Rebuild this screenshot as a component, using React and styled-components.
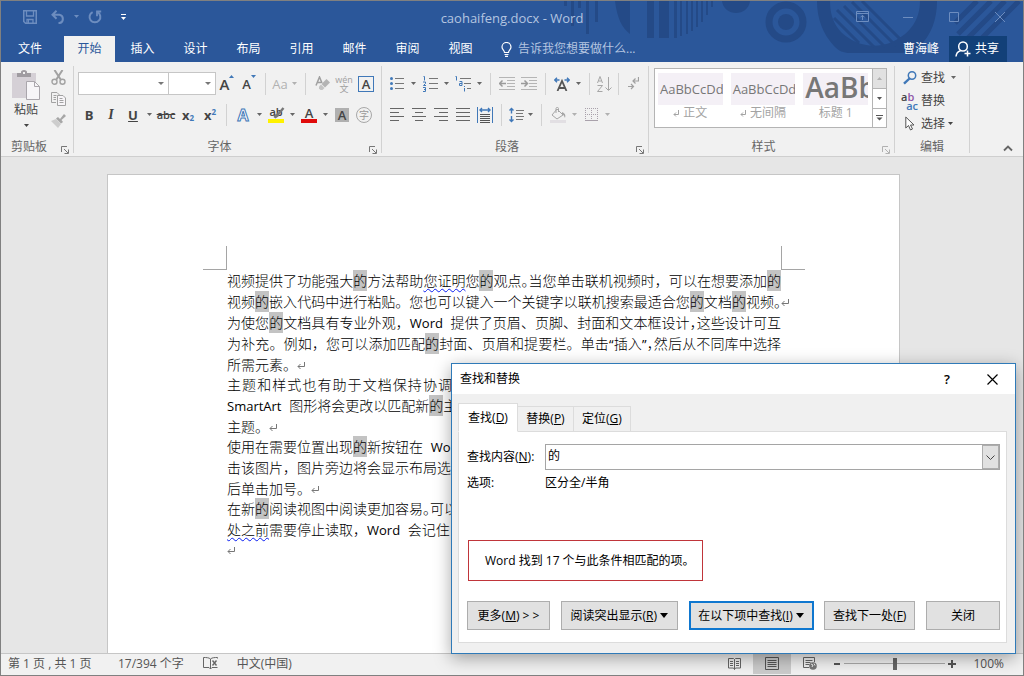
import React, { useState } from 'react';
import styled, { createGlobalStyle, css } from 'styled-components';

const color = {
    brand: '#2b579a',
    brandDark: '#124078',
    pattern: '#244a87',
    faded: '#6d8dbf',
    ribbon: '#f1f1f1',
    line: '#d2d2d2',
    text: '#444444',
    label: '#666666',
    accent: '#4078b8',
    disabled: '#b1b1b1',
};

const GlobalStyle = createGlobalStyle`
    * {
        box-sizing: border-box;
    }
    body {
        margin: 0;
        font-family: 'Open Sans', 'Noto Sans CJK SC', sans-serif;
        font-size: 12px;
        line-height: 16px;
        color: ${color.text};
    }
    button, input, select {
        font: inherit;
        color: inherit;
    }
    button {
        padding: 0;
        border: 0;
        background: none;
    }
    svg {
        display: block;
        flex: none;
    }
`;

/* ---------- icons ---------- */

const Icon = ({ w = 16, h = 16, children, ...rest }) => (
    <svg
        width={w}
        height={h}
        viewBox={`0 0 ${w} ${h}`}
        fill="none"
        stroke="currentColor"
        aria-hidden="true"
        {...rest}
    >
        {children}
    </svg>
);

const SaveIcon = () => (
    <Icon w={14} h={14}>
        <path d="M.75 .75h12.5v12.5H2.5L.75 11.5z" strokeWidth="1.5" />
        <path d="M3.5 1v5h7V1M4 13V9.5h6V13" strokeWidth="1.3" />
        <path d="M5.5 10v3" />
    </Icon>
);

const UndoIcon = () => (
    <Icon w={15} h={14}>
        <path d="M5.5 .8L1.5 4.7l4 4M2 4.7h6.5a4.3 4.3 0 0 1 0 8.4H7.5" strokeWidth="2" />
    </Icon>
);

const RedoIcon = () => (
    <Icon w={14} h={14}>
        <path d="M9.5 2.2A5.4 5.4 0 1 1 4.6 2.1" strokeWidth="2" />
        <path d="M9 6.2V1.5h4.2" strokeWidth="1.8" />
    </Icon>
);

const RibbonOptionsIcon = () => (
    <Icon w={13} h={11}>
        <path d="M.5 .5h12v10H.5zM.5 2.5h12M6.5 9V4.5M4.5 6.3l2-2 2 2" />
    </Icon>
);

const BulbIcon = () => (
    <Icon w={11} h={15}>
        <path
            d="M3.5 10.5C3.5 8.5 1 7.8 1 5a4.4 4.4 0 0 1 9 0c0 2.8-2.5 3.5-2.5 5.5zM3.5 12.5h4M4 14.3h3"
            strokeWidth="1.2"
        />
    </Icon>
);

const ShareIcon = () => (
    <Icon>
        <path
            d="M1 15.500c.3-3.200 1.800-5 4.300-5.800M8 1a4.300 4.300 0 0 1 4.300 4.500C12.300 8 10.500 10 8 10S3.700 8 3.700 5.500 5.500 1 8 1zM12.500 9.500v6M9.500 12.500h6"
            strokeWidth="1.500"
        />
    </Icon>
);

const PasteIcon = () => (
    <Icon w={28} h={30} stroke="none">
        <path d="M0 3h24v25H0z" fill="#d5d0d6" />
        <path d="M5 3h4V2c0-1 1-2 3-2s3 1 3 2v1h4v4H5z" fill="#a09ca1" />
        <path d="M11 2h2v2h-2z" fill="#f1f1f1" />
        <path d="M14.500 11.500h8l5 5v13h-13z" fill="#f7f5f8" stroke="#aaa6ac" />
        <path d="M22.500 11.500v5h5" stroke="#aaa6ac" />
    </Icon>
);

const CutIcon = () => (
    <Icon w={15} h={15} stroke="#a2a2a2" strokeWidth="1.4">
        <path d="M3.500 0l6.500 10M11.500 0L5 10" strokeWidth="2" />
        <circle cx="3.500" cy="11.700" r="2.500" />
        <circle cx="11.500" cy="11.700" r="2.500" />
    </Icon>
);

const CopyIcon = () => (
    <Icon w={15} h={14} stroke="#a2a2a2">
        <path d="M5 10.500H.5V.5H6l2.500 2.500M2.500 3.500h3M2.500 5.500h2.500M2.500 7.500h2.500" />
        <path d="M6.500 3.500H12l2.500 2.500v7.500h-8z" fill="#f7f5f8" />
        <path d="M8.500 6.500h3M8.500 8.500h4M8.500 10.500h4" />
    </Icon>
);

const BrushIcon = () => (
    <Icon w={15} h={14} stroke="none">
        <path d="M0 7l5-2 5 5-3 4z" fill="#cdcdcd" />
        <path d="M5 4.500l2-1.500 2 2 4-5 2 2-4.500 4 1.500 2-2 1.500z" fill="#a6a6a6" />
    </Icon>
);

const EraserIcon = () => (
    <Icon w={15} h={15} stroke="none">
        <path d="M1 9.500L4.500 1 7 7M2.300 6.500h4" stroke="#a0a0a0" strokeWidth="1.500" />
        <path d="M11.500 3l3.500 3.500-5 5-3.500-3.500z" fill="#b4b4b4" />
        <path d="M6 8.500l3.500 3.500-2 2H5.500L4 12.500V10.500z" fill="#c4c4c4" />
    </Icon>
);

const HighlighterIcon = () => (
    <Icon w={17} h={12}>
        <path d="M15.500 1L9.500 8" stroke="#777" strokeWidth="2.400" />
        <path d="M8 6.500L11 9l-3.500 2.500L5.500 10z" fill="#777" stroke="none" />
    </Icon>
);

const BulletsIcon = () => (
    <Icon w={14} h={15}>
        <path d="M5 2.500h9M5 7.500h9M5 12.500h9" stroke="#777" />
        <g fill={color.accent} stroke="none">
            <circle cx="1.500" cy="2.500" r="1.500" />
            <circle cx="1.500" cy="7.500" r="1.500" />
            <circle cx="1.500" cy="12.500" r="1.500" />
        </g>
    </Icon>
);

const NumberingIcon = () => (
    <Icon w={15} h={16}>
        <path d="M6 2.500h9M6 7.500h9M6 12.500h9" stroke="#777" />
        <path
            d="M.5 .5h1v4M0 6h2.500v1.500L.5 9.500H3M0 11.500h2.500v4H0M1 13.500h1.500"
            stroke={color.accent}
        />
    </Icon>
);

const MultilevelIcon = () => (
    <Icon w={16} h={16}>
        <path d="M5 2.500h11M9 7.500h7M12 12.500h4" stroke="#777" />
        <path
            d="M.5 .5h1v4M4.500 5.500H7v4H4.500v-2H7M9.500 12v3.500M9.500 10v1"
            stroke={color.accent}
        />
    </Icon>
);

const IndentIcon = ({ out }) => (
    <Icon w={16} h={13} stroke="#b5b5b5">
        <path d="M0 .5h16M8 3.500h8M8 6.500h8M8 9.500h8M0 12.500h16" />
        <path
            d={out ? 'M7 6.500H1M3.500 3.500l-3 3 3 3' : 'M0 6.500h6M3.500 3.500l3 3-3 3'}
            stroke="#9a9a9a"
            strokeWidth="1.500"
        />
    </Icon>
);

const TextScaleIcon = () => (
    <Icon w={16} h={14}>
        <path d="M3.500 14L8 4l4.500 10M5 11h6" stroke="#555" strokeWidth="1.800" />
        <path
            d="M5.500 3H1M3 .8L.8 3 3 5.200M10.500 3H15M13 .8L15.200 3 13 5.200"
            stroke={color.accent}
            strokeWidth="1.400"
        />
    </Icon>
);

const SortIcon = () => (
    <Icon w={15} h={16} stroke="#a6a6a6">
        <path d="M.5 7L3 .5 5.500 7M1.500 5h3M.5 9.500h5l-5 6h5M11.500 1v13M8.500 11.500l3 3 3-3" />
    </Icon>
);

const MarksIcon = () => (
    <Icon w={11} h={13} stroke="#a0a0a0" strokeWidth="1.200">
        <path d="M10.500 0v4H5M7.500 1.500L5 4l2.500 2.500M0 9.500h5M3 7l2.500 2.500L3 12" />
    </Icon>
);

const alignPaths = {
    left: 'M0 .5h14M0 4.500h9M0 8.500h14M0 12.500h9',
    center: 'M0 .5h14M3 4.500h8M0 8.500h14M3 12.500h8',
    right: 'M0 .5h14M5 4.500h9M0 8.500h14M5 12.500h9',
    justify: 'M0 .5h14M0 4.500h14M0 8.500h14M0 12.500h14',
};

const AlignIcon = ({ kind }) => (
    <Icon w={14} h={13} stroke="#666">
        <path d={alignPaths[kind]} />
    </Icon>
);

const DistributeIcon = () => (
    <Icon w={16} h={16}>
        <path d="M3 7.500h10M3 9.500h10M3 11.500h10M3 13.500h10M3 15.500h10" stroke="#555" />
        <path d="M.5 0v16M15.500 0v16" stroke={color.accent} />
        <path
            d="M3 3h10M5 1L3 3l2 2M11 1l2 2-2 2"
            stroke={color.accent}
            strokeWidth="1.400"
        />
    </Icon>
);

const SpacingIcon = () => (
    <Icon w={15} h={16}>
        <path d="M7 3.500h8M7 6.500h7M7 9.500h8M7 12.500h7" stroke="#777" />
        <path
            d="M2.500 1v5.500M.5 3.500l2-2 2 2M2.500 9v5.500M.5 12.500l2 2 2-2"
            stroke={color.accent}
            strokeWidth="1.400"
        />
    </Icon>
);

const BucketIcon = () => (
    <Icon w={17} h={16} stroke="#a6a6a6">
        <path d="M7 2l6 6-6 4-5-4zM6 6V1.500c0-1.500 2.500-1.500 2.500 0V5" />
        <path d="M12 5c3 1 4 3 3 6-1-2-1-3-3-4z" fill="#a6a6a6" stroke="none" />
        <path d="M0 13h16v3H0z" fill="#e2dfe3" stroke="none" />
    </Icon>
);

const BordersIcon = () => (
    <Icon w={13} h={13} stroke="#a9a1ab">
        <path d="M.5 0v12M6.500 0v12M12.500 0v12M0 .5h13M0 6.500h13" strokeDasharray="1 1" />
        <path d="M0 12.500h13" />
    </Icon>
);

const LauncherIcon = () => (
    <Icon w={8} h={8}>
        <path d="M.5 6V.5H6M3 3l4 4M7.500 3.500v4h-4" />
    </Icon>
);

const SearchIcon = () => (
    <Icon w={14} h={14} stroke={color.accent}>
        <circle cx="9" cy="4.500" r="3.700" strokeWidth="1.500" />
        <path d="M6.500 7.500L1 12.700" strokeWidth="2.400" />
    </Icon>
);

const PointerIcon = () => (
    <Icon w={10} h={15} stroke="#555">
        <path d="M.8 1v11l2.700-2.500L5.500 14l2-1-2-4h3.500z" fill="#fff" />
    </Icon>
);

const ReturnMark = () => (
    <MarkSvg width="8" height="8" viewBox="0 0 8 8" fill="none" stroke="#777">
        <path d="M7.500 0v4.500H1M3.500 2L1 4.500 3.500 7" />
    </MarkSvg>
);

const ProofIcon = () => (
    <Icon w={15} h={13} stroke="#666">
        <path d="M7.500 2v10M7.500 2C6 .5 3 .5 .5 .5v10H6l1.500 1.500L9 10.500h5.500M7.500 2C9 .5 12 .5 14.500 .5v1" />
        <path d="M9.500 3.500l4 5M13.500 3.500l-4 5" strokeWidth="1.400" />
    </Icon>
);

const ReadIcon = () => (
    <Icon w={13} h={12} stroke="#666">
        <path d="M6.500 1.500v10M6.500 1.500L5.500 .5H.5v9.500h5l1 1.500 1-1.500h5V.5h-5z" />
        <path d="M2 3.500h3M2 5.500h3M2 7.500h3M8 3.500h3M8 5.500h3M8 7.500h3" />
    </Icon>
);

const PrintIcon = () => (
    <Icon w={14} h={13} stroke="#555">
        <path d="M.5 .5h13v12H.5zM2.500 3.500h9M2.500 5.500h9M2.500 7.500h9M2.500 9.500h9" />
    </Icon>
);

const WebIcon = () => (
    <Icon w={14} h={13} stroke="#666">
        <path d="M6 10.500H.5V.5h11V5M2.500 3.500h7M2.500 5.500h5M2.500 7.500h4" />
        <circle cx="10" cy="9" r="3.800" fill="#777" stroke="none" />
        <path d="M8 7l2 1-1 2M11 6.500l1 2" stroke="#f1f1f1" />
    </Icon>
);

const TitlePattern = () => (
    <PatternSvg width="473" height="61" viewBox="0 0 473 61" aria-hidden="true">
        <g fill={color.pattern}>
            <path d="M14 0h3v5h-3zM21 0h3v25h-3zM28 0h3v7h-3zM36 0h3v33h-3zM45 0h3v21h-3z" />
            <path d="M65 0h15v33c-8-6-13-16-15-33zM97 0h7v37h-7zM109 0h10v37h-10z" />
            <path d="M124 0h3v37h-3zM130 0h2v35h-2zM136 0h2v33h-2zM141 0h2v30h-2zM146 0h2v26h-2zM151 0h2v21h-2zM156 0h2v14h-2zM161 0h2v6h-2z" />
            <path d="M172 0h28c-2 16-26 16-28 0z" />
            <circle cx="236" cy="21" r="8" />
            <path d="M267 0h13c0 17 6 32 26 41 12 5 24 5 36 0 20-9 28-24 28-41h17c0 19-6 34-18 46-5 4-8 6-13 6h-56c-7 0-11-2-16-7-11-12-17-27-17-45z" />
        </g>
        <g fill="none" stroke={color.pattern}>
            <circle cx="236" cy="21" r="17" strokeWidth="7" />
            <path d="M284 17l25 25M287 9l37 37M294 5l41 41M302 1l44 44M312 0l42 42" strokeWidth="3" />
            <path
                d="M405 22L427 0M408 33L441 0M418 37L455 0M429 40L469 0"
                strokeWidth="5"
            />
        </g>
    </PatternSvg>
);

/* ---------- window ---------- */

const Window = styled.div`
    position: relative;
    display: flex;
    flex-direction: column;
    min-height: 100vh;
    border: 1px solid #808080;
    background: #e6e6e6;
    overflow: hidden;
`;

const Header = styled.header`
    position: relative;
    background: ${color.brand};
    color: #fff;
`;

const PatternSvg = styled.svg`
    position: absolute;
    right: 0;
    top: 0;
`;

const TitleBar = styled.div`
    position: relative;
    display: grid;
    grid-template-columns: 1fr auto 1fr;
    align-items: center;
    height: 35px;
    color: ${color.faded};
`;

const QuickAccess = styled.div`
    display: flex;
    align-items: center;
    gap: 4px;
    padding: 0 0 4px 17px;
`;

const Title = styled.span`
    padding-bottom: 2px;
    font-size: 13px;
    color: #b4c5e0;
`;

const WindowButtons = styled.div`
    display: flex;
    justify-content: flex-end;
    padding-bottom: 4px;
`;

const BarButton = styled.button`
    display: flex;
    align-items: center;
    justify-content: center;
    width: ${({ $w }) => $w || 24}px;
    height: 24px;
    color: ${({ $bright }) => ($bright ? '#fff' : 'inherit')};
`;

const TabBar = styled.nav`
    position: relative;
    display: flex;
    height: 26px;
`;

const Tab = styled.button`
    width: 53px;
    color: ${({ $active }) => ($active ? color.brand : '#fff')};
    ${({ $active }) =>
        $active &&
        css`
            width: 51px;
            margin-right: 1px;
            background: ${color.ribbon};
        `}
    ${({ $file }) =>
        $file &&
        css`
            width: 58px;
            margin-right: 5px;
        `}
`;

const TellMe = styled.button`
    display: flex;
    align-items: center;
    gap: 6px;
    margin-left: 14px;
    color: #b4c5e0;
    svg {
        color: #fff;
    }
`;

const Account = styled.div`
    display: flex;
    align-items: center;
    gap: 10px;
    margin-left: auto;
    padding-right: 16px;
`;

const ShareButton = styled.button`
    display: flex;
    align-items: center;
    gap: 4px;
    height: 26px;
    padding: 0 8px 0 6px;
    background: ${color.brandDark};
`;

/* ---------- ribbon ---------- */

const Ribbon = styled.div`
    position: relative;
    display: flex;
    height: 95px;
    padding: 4px 0 3px;
    background: ${color.ribbon};
    border-bottom: 1px solid #cfcfcf;
`;

const Group = styled.section`
    display: flex;
    flex-direction: column;
    justify-content: space-between;
    width: ${({ $w }) => $w}px;
    padding: 0 4px;
    border-right: 1px solid ${color.line};
`;

const GroupBody = styled.div`
    display: flex;
    flex-direction: ${({ $row }) => ($row ? 'row' : 'column')};
    gap: ${({ $row }) => ($row ? 2 : 4)}px;
`;

const GroupFooter = styled.div`
    display: flex;
    align-items: center;
    height: 12px;
    color: ${color.label};
`;

const GroupName = styled.span`
    flex: 1;
    padding-right: 8px;
    text-align: center;
    &:only-child {
        padding-right: 0;
    }
`;

const Launcher = styled.button`
    padding-top: 5px;
    color: ${({ $disabled }) => ($disabled ? color.disabled : '#777')};
`;

const CollapseButton = styled.button`
    margin: auto 10px 1px auto;
`;

const ToolRow = styled.div`
    display: flex;
    align-items: center;
    height: 27px;
    &:first-child {
        margin-top: 4px;
    }
`;

const Tool = styled.button`
    display: flex;
    align-items: center;
    justify-content: center;
    width: ${({ $narrow }) => ($narrow ? 18 : 22)}px;
    height: 22px;
    flex: none;
    color: ${({ $disabled }) => ($disabled ? color.disabled : color.text)};
`;

const Letter = styled.span`
    font-size: 13px;
    font-weight: ${({ $bold }) => ($bold ? 700 : 400)};
    line-height: 16px;
`;

const Italic = styled.i`
    font-family: 'Liberation Serif', serif;
    font-size: 14px;
    font-weight: 700;
`;

const Strike = styled.s`
    font-size: 11px;
    font-weight: 600;
`;

const Script = styled.span`
    display: flex;
    align-items: ${({ $up }) => ($up ? 'flex-start' : 'flex-end')};
    font-size: 13px;
    font-weight: 700;
    line-height: 14px;
    small {
        font-size: 8px;
        line-height: 8px;
        color: ${color.accent};
    }
`;

const BoxedLetter = styled.span`
    width: 16px;
    height: 16px;
    border: 1px solid ${color.accent};
    font-weight: 600;
    font-size: 13px;
    line-height: 14px;
    text-align: center;
`;

const ShadedLetter = styled.span`
    width: 14px;
    height: 14px;
    background: #b0b0b0;
    font-weight: 600;
    font-size: 13px;
    line-height: 14px;
`;

const CircledLetter = styled.span`
    width: 16px;
    height: 16px;
    border: 1px solid #a8a8a8;
    border-radius: 50%;
    font-size: 10px;
    line-height: 14px;
    color: #999;
`;

const Phonetic = styled.span`
    display: flex;
    flex-direction: column;
    align-items: center;
    font-size: 9px;
    line-height: 9px;
    color: #a0a0a0;
`;

const EffectLetter = styled.span`
    font-size: 16px;
    font-weight: 700;
    color: #fff;
    -webkit-text-stroke: 1px ${color.accent};
`;

const Swatch = styled.span`
    display: flex;
    flex-direction: column;
    align-items: center;
    width: 16px;
    border-bottom: 4px solid ${({ $color }) => $color};
    font-size: 13px;
    font-weight: 600;
    line-height: 12px;
`;

const HighlightGlyph = styled.span`
    display: grid;
    font-size: 11px;
    line-height: 10px;
    > * {
        grid-area: 1 / 1;
    }
`;

const SizeLetter = styled.span`
    display: flex;
    align-items: flex-start;
    font-size: ${({ $size }) => $size}px;
    font-weight: 600;
    line-height: 18px;
    svg {
        color: ${color.accent};
    }
`;

const CaretButton = styled.button`
    display: flex;
    align-items: center;
    justify-content: center;
    width: 11px;
    height: 22px;
    flex: none;
    color: ${({ $disabled }) => ($disabled ? color.disabled : '#666')};
`;

const Separator = styled.span`
    width: 1px;
    height: 22px;
    margin: 0 5px;
    background: ${color.line};
`;

const SelectBox = styled.label`
    display: flex;
    align-items: center;
    width: ${({ $w }) => $w}px;
    height: 23px;
    padding-right: 4px;
    border: 1px solid #c6c6c6;
    background: #fff;
    & + & {
        border-left: 0;
    }
    svg {
        color: #777;
    }
`;

const NativeSelect = styled.select`
    flex: 1;
    min-width: 0;
    height: 100%;
    border: 0;
    background: none;
    appearance: none;
`;

const PasteButton = styled.button`
    display: flex;
    flex-direction: column;
    align-items: center;
    gap: 2px;
    width: 42px;
    padding-top: 4px;
    svg:last-child {
        margin-top: 4px;
    }
`;

const IconColumn = styled.div`
    display: flex;
    flex-direction: column;
`;

const Gallery = styled.div`
    display: flex;
    height: 60px;
    margin: 2px 3px 0 1px;
    border: 1px solid #b4b4b4;
    background: #fff;
`;

const StyleList = styled.div`
    display: flex;
    flex: 1;
    gap: 8px;
    min-width: 0;
    padding: 4px 4px 0 3px;
`;

const StyleButton = styled.button`
    display: flex;
    flex: 1;
    flex-direction: column;
    align-items: center;
    min-width: 0;
    color: #a3a3a3;
`;

const Sample = styled.span`
    width: 100%;
    height: 32px;
    padding: 0 2px;
    overflow: hidden;
    background: #f4f0f6;
    color: #777;
    font-size: ${({ $large }) => ($large ? 28 : 13)}px;
    font-weight: ${({ $large }) => ($large ? 600 : 400)};
    line-height: ${({ $large }) => ($large ? 28 : 32)}px;
    text-align: left;
    white-space: nowrap;
`;

const StyleName = styled.span`
    display: flex;
    align-items: center;
    gap: 4px;
`;

const GalleryScroll = styled.div`
    display: grid;
    grid-template-rows: repeat(3, 1fr);
    flex: none;
    width: 14px;
    border-left: 1px solid #b4b4b4;
`;

const ScrollButton = styled.button`
    display: flex;
    align-items: center;
    justify-content: center;
    background: ${({ $disabled }) => ($disabled ? '#e1e1e1' : '#fff')};
    color: ${({ $disabled }) => ($disabled ? '#b1b1b1' : '#555')};
    & + & {
        border-top: 1px solid #b4b4b4;
    }
`;

const EditButton = styled.button`
    display: flex;
    align-items: center;
    gap: 3px;
    height: 23px;
    padding-left: 2px;
`;

const EditIcon = styled.span`
    display: flex;
    justify-content: center;
    width: 17px;
`;

const ReplaceGlyph = styled.span`
    width: 17px;
    font-size: 11px;
    font-weight: 600;
    line-height: 9px;
    text-align: left;
    b {
        display: block;
        font-weight: 600;
        text-align: right;
        color: ${color.accent};
    }
    em {
        font-style: normal;
        color: #8e57a8;
    }
`;

/* ---------- document ---------- */

const Workspace = styled.main`
    display: flex;
    flex: 1;
    justify-content: center;
    padding: 17px 17px 0 0;
`;

const Page = styled.article`
    width: 793px;
    padding: 71px 118px 0 119px;
    border: 1px solid #c6c6c6;
    border-bottom: 0;
    background: #fff;
`;

const CropRow = styled.div`
    display: flex;
    justify-content: space-between;
    margin: 0 -24px;
`;

const CropMark = styled.span`
    width: 24px;
    height: 24px;
    border-bottom: 1px solid #a5a5a5;
    ${({ $side }) =>
        css`
            border-${$side}: 1px solid #a5a5a5;
        `}
`;

const Paragraph = styled.p`
    margin: 0;
    font-size: 14px;
    font-weight: 300;
    line-height: 21px;
    color: #000;
    & + & + & {
        margin-top: -1px;
    }
`;

const Line = styled.span`
    display: block;
    width: ${({ $half }) => ($half ? '225px' : 'auto')};
    height: 21px;
    white-space: nowrap;
    text-align-last: ${({ $last }) => ($last ? 'left' : 'justify')};
`;

const Found = styled.mark`
    display: inline-block;
    height: 21px;
    background: #c3c3c3;
    color: inherit;
    vertical-align: top;
`;

const Latin = styled.span`
    font-size: 13px;
    font-weight: 400;
`;

const Gap = styled.span`
    padding-left: 4px;
`;

const HalfWidth = styled.span`
    font-feature-settings: 'halt';
`;

const Squiggle = styled.span`
    text-decoration: underline wavy #0a1ef0 1px;
    text-underline-offset: 2px;
`;

const MarkSvg = styled.svg`
    display: inline-block;
    margin-right: -8px;
`;

/* ---------- dialog ---------- */

const Dialog = styled.section`
    position: absolute;
    right: 7px;
    bottom: 21px;
    width: 565px;
    border: 1px solid #2f7ab8;
    background: #f0f0f0;
    color: #000;
    box-shadow: 0 4px 16px rgba(0, 0, 0, 0.35);
`;

const DialogTitle = styled.div`
    display: flex;
    align-items: center;
    height: 30px;
    padding: 0 16px 0 8px;
    background: #fff;
`;

const DialogName = styled.h2`
    flex: 1;
    margin: 0;
    font-size: 12px;
    font-weight: 400;
`;

const TitleButton = styled.button`
    display: flex;
    justify-content: center;
    width: 14px;
    font-weight: 600;
    font-size: 13px;
    & + & {
        margin-left: 31px;
    }
`;

const DialogTabs = styled.div`
    display: flex;
    align-items: flex-end;
    margin: 9px 8px -1px 6px;
`;

const DialogTab = styled.button`
    min-width: ${({ $active }) => ($active ? 60 : 56)}px;
    height: ${({ $active }) => ($active ? 29 : 26)}px;
    padding: 0 8px;
    border: 1px solid #dcdcdc;
    border-left-width: ${({ $active }) => ($active ? 1 : 0)}px;
    border-bottom-color: ${({ $active }) => ($active ? '#fff' : '#dcdcdc')};
    background: ${({ $active }) => ($active ? '#fff' : '#f0f0f0')};
`;

const Panel = styled.form`
    margin: 0 8px 10px 6px;
    padding: 12px 6px 12px 8px;
    border: 1px solid #dcdcdc;
    background: #fff;
`;

const FieldRow = styled.div`
    display: grid;
    grid-template-columns: 78px 1fr;
    align-items: center;
    min-height: 26px;
`;

const Combo = styled.div`
    display: flex;
    height: 26px;
    border: 1px solid #a5a5a5;
    background: #fff;
`;

const ComboInput = styled.input`
    flex: 1;
    min-width: 0;
    padding: 0 2px 2px;
    border: 0;
    outline: 0;
    background: none;
`;

const ComboButton = styled.button`
    display: flex;
    align-items: center;
    justify-content: center;
    width: 17px;
    border: 1px solid #adadad;
    background: #e1e1e1;
`;

const Result = styled.output`
    display: block;
    width: fit-content;
    margin: 44px 0 20px 1px;
    padding: 12px 7px 11px 16px;
    border: 1px solid #c0353a;
`;

const Actions = styled.div`
    display: flex;
    justify-content: space-between;
`;

const ActionButton = styled.button`
    display: flex;
    align-items: center;
    justify-content: center;
    gap: 3px;
    height: 29px;
    min-width: ${({ $min }) => $min || 0}px;
    padding: 0 ${({ $focused }) => ($focused ? 6 : 7)}px;
    border: ${({ $focused }) =>
        $focused ? '2px solid #0f77cf' : '1px solid #adadad'};
    background: #e1e1e1;
`;

/* ---------- status bar ---------- */

const StatusBar = styled.footer`
    display: flex;
    align-items: center;
    height: 22px;
    padding: 0 19px 2px 7px;
    border-top: 1px solid #c6c6c6;
    background: ${color.ribbon};
    color: #555;
`;

const StatusText = styled.span`
    margin-right: 19px;
    &:first-child {
        min-width: 91px;
    }
`;

const ViewButtons = styled.div`
    display: flex;
    margin-left: auto;
`;

const ViewButton = styled.button`
    display: flex;
    align-items: center;
    justify-content: center;
    width: 38px;
    height: 21px;
    background: ${({ $active }) => ($active ? '#cbcbcb' : 'none')};
`;

const Zoom = styled.div`
    display: flex;
    align-items: center;
    gap: 3px;
    padding: 0 17px 0 4px;
`;

const ZoomSlider = styled.input`
    width: 101px;
    height: 12px;
    margin: 0;
    appearance: none;
    background: linear-gradient(#aaa, #aaa) center / 100% 1px no-repeat;
    &::-webkit-slider-thumb {
        appearance: none;
        width: 4px;
        height: 12px;
        background: #666;
    }
`;

/* ---------- parts ---------- */

const Arrow = ({ up, w = 5, h = 3 }) => (
    <svg width={w} height={h} viewBox="0 0 6 3" preserveAspectRatio="none" aria-hidden="true">
        <path d={up ? 'M0 3h6L3 0z' : 'M0 0h6L3 3z'} fill="currentColor" />
    </svg>
);

const Caret = ({ disabled }) => (
    <CaretButton $disabled={disabled} aria-label="更多选项">
        <Arrow />
    </CaretButton>
);

const FontSelect = ({ w, label }) => (
    <SelectBox $w={w}>
        <NativeSelect aria-label={label}>
            <option />
        </NativeSelect>
        <Arrow w={6} />
    </SelectBox>
);

const RibbonGroup = ({ w, name, row, launcher, launcherDisabled, children }) => (
    <Group $w={w}>
        <GroupBody $row={row}>{children}</GroupBody>
        <GroupFooter>
            <GroupName>{name}</GroupName>
            {launcher && (
                <Launcher $disabled={launcherDisabled} aria-label={name}>
                    <LauncherIcon />
                </Launcher>
            )}
        </GroupFooter>
    </Group>
);

const tabs = ['开始', '插入', '设计', '布局', '引用', '邮件', '审阅', '视图'];

const De = () => <Found>的</Found>;

const DocumentText = () => (
    <>
        <Paragraph>
            <Line>
                视频提供了功能强大
                <De />
                方法帮助<Squiggle>您证明</Squiggle>您
                <De />
                观点<HalfWidth>。</HalfWidth>当您单击联机视频时&#65292;可以在想要添加
                <De />
            </Line>
            <Line>
                视频
                <De />
                嵌入代码中进行粘贴。您也可以键入一个关键字以联机搜索最适合您
                <De />
                文档
                <De />
                视频<HalfWidth>。</HalfWidth>
                <ReturnMark />
            </Line>
        </Paragraph>
        <Paragraph>
            <Line>
                为使您
                <De />
                文档具有专业外观&#65292;<Latin>Word</Latin>
                <Gap> </Gap>提供了页眉、页脚、封面和文本框设计<HalfWidth>&#65292;</HalfWidth>
                这些设计可互
            </Line>
            <Line>
                为补充。例如&#65292;您可以添加匹配
                <De />
                封面、页眉和提要栏。单击<Latin>“</Latin>插入<Latin>”</Latin>
                <HalfWidth>&#65292;</HalfWidth>然后从不同库中选择
            </Line>
            <Line $last>
                所需元素。
                <ReturnMark />
            </Line>
        </Paragraph>
        <Paragraph>
            <Line $half>主题和样式也有助于文档保持协调</Line>
            <Line $last>
                <Latin>SmartArt</Latin>
                <Gap> </Gap>图形将会更改以匹配新
                <De />主
            </Line>
            <Line $last>
                主题。
                <ReturnMark />
            </Line>
        </Paragraph>
        <Paragraph>
            <Line $last>
                使用在需要位置出现
                <De />
                新按钮在
                <Gap> </Gap>
                <Latin>Wo</Latin>
            </Line>
            <Line $last>击该图片&#65292;图片旁边将会显示布局选</Line>
            <Line $last>
                后单击加号。
                <ReturnMark />
            </Line>
        </Paragraph>
        <Paragraph>
            <Line $last>
                在新
                <De />
                阅读视图中阅读更加容易<HalfWidth>。</HalfWidth>可以
            </Line>
            <Line $last>
                <Squiggle>处之前</Squiggle>需要停止读取&#65292;<Latin>Word</Latin>
                <Gap> </Gap>会记住
            </Line>
        </Paragraph>
        <Paragraph>
            <Line $last>
                <ReturnMark />
            </Line>
        </Paragraph>
    </>
);

function FindDialog({ onClose }) {
    const [query, setQuery] = useState('的');

    return (
        <Dialog role="dialog" aria-labelledby="find-title">
            <DialogTitle>
                <DialogName id="find-title">查找和替换</DialogName>
                <TitleButton aria-label="帮助">?</TitleButton>
                <TitleButton aria-label="关闭窗口" onClick={onClose}>
                    <Icon w={11} h={11}>
                        <path d="M.5 .5l10 10M10.500 .5l-10 10" strokeWidth="1.200" />
                    </Icon>
                </TitleButton>
            </DialogTitle>
            <DialogTabs role="tablist">
                <DialogTab role="tab" aria-selected="true" $active>
                    查找(<u>D</u>)
                </DialogTab>
                <DialogTab role="tab">
                    替换(<u>P</u>)
                </DialogTab>
                <DialogTab role="tab">
                    定位(<u>G</u>)
                </DialogTab>
            </DialogTabs>
            <Panel onSubmit={e => e.preventDefault()}>
                <FieldRow>
                    <label htmlFor="find-what">
                        查找内容(<u>N</u>):
                    </label>
                    <Combo>
                        <ComboInput
                            id="find-what"
                            value={query}
                            onChange={e => setQuery(e.target.value)}
                        />
                        <ComboButton type="button" aria-label="历史记录">
                            <Icon w={9} h={5} stroke="#444">
                                <path d="M.5 .5l4 4 4-4" />
                            </Icon>
                        </ComboButton>
                    </Combo>
                </FieldRow>
                <FieldRow>
                    <span>选项:</span>
                    <span>区分全/半角</span>
                </FieldRow>
                <Result>Word 找到 17 个与此条件相匹配的项。</Result>
                <Actions>
                    <ActionButton type="button" $min={83}>
                        <span>
                            更多(<u>M</u>) &gt; &gt;
                        </span>
                    </ActionButton>
                    <ActionButton type="button" $min={117}>
                        <span>
                            阅读突出显示(<u>R</u>)
                        </span>
                        <Arrow w={8} h={5} />
                    </ActionButton>
                    <ActionButton type="button" $min={125} $focused>
                        <span>
                            在以下项中查找(<u>I</u>)
                        </span>
                        <Arrow w={8} h={5} />
                    </ActionButton>
                    <ActionButton type="submit" $min={91}>
                        <span>
                            查找下一处(<u>F</u>)
                        </span>
                    </ActionButton>
                    <ActionButton type="button" $min={74} onClick={onClose}>
                        关闭
                    </ActionButton>
                </Actions>
            </Panel>
        </Dialog>
    );
}

const FontGroup = () => (
    <RibbonGroup w={308} name="字体" launcher>
        <ToolRow>
            <FontSelect w={92} label="字体" />
            <FontSelect w={47} label="字号" />
            <Tool aria-label="增大字号">
                <SizeLetter $size={15}>
                    A<Arrow up />
                </SizeLetter>
            </Tool>
            <Tool aria-label="减小字号">
                <SizeLetter $size={13}>
                    A<Arrow />
                </SizeLetter>
            </Tool>
            <Separator />
            <Tool $narrow $disabled aria-label="更改大小写">
                <Letter>Aa</Letter>
            </Tool>
            <Caret disabled />
            <Separator />
            <Tool aria-label="清除格式">
                <EraserIcon />
            </Tool>
            <Tool aria-label="拼音指南">
                <Phonetic>
                    <span>wén</span>
                    <span>文</span>
                </Phonetic>
            </Tool>
            <Tool aria-label="字符边框">
                <BoxedLetter>A</BoxedLetter>
            </Tool>
        </ToolRow>
        <ToolRow>
            <Tool aria-label="加粗">
                <Letter $bold>B</Letter>
            </Tool>
            <Tool aria-label="倾斜">
                <Italic>I</Italic>
            </Tool>
            <Tool aria-label="下划线">
                <Letter $bold as="u">
                    U
                </Letter>
            </Tool>
            <Caret />
            <Tool aria-label="删除线">
                <Strike>abc</Strike>
            </Tool>
            <Tool aria-label="下标">
                <Script>
                    x<small>2</small>
                </Script>
            </Tool>
            <Tool aria-label="上标">
                <Script $up>
                    x<small>2</small>
                </Script>
            </Tool>
            <Separator />
            <Tool aria-label="文本效果">
                <EffectLetter>A</EffectLetter>
            </Tool>
            <Caret />
            <Tool aria-label="突出显示">
                <Swatch $color="#fff200">
                    <HighlightGlyph>
                        <span>ab</span>
                        <HighlighterIcon />
                    </HighlightGlyph>
                </Swatch>
            </Tool>
            <Caret />
            <Tool aria-label="字体颜色">
                <Swatch $color="#e00b0b">A</Swatch>
            </Tool>
            <Caret />
            <Tool aria-label="字符底纹">
                <ShadedLetter>A</ShadedLetter>
            </Tool>
            <Tool aria-label="带圈字符">
                <CircledLetter>字</CircledLetter>
            </Tool>
        </ToolRow>
    </RibbonGroup>
);

const ParagraphGroup = () => (
    <RibbonGroup w={267} name="段落" launcher>
        <ToolRow>
            <Tool aria-label="项目符号">
                <BulletsIcon />
            </Tool>
            <Caret />
            <Tool aria-label="编号">
                <NumberingIcon />
            </Tool>
            <Caret />
            <Tool aria-label="多级列表">
                <MultilevelIcon />
            </Tool>
            <Caret />
            <Separator />
            <Tool aria-label="减少缩进量">
                <IndentIcon out />
            </Tool>
            <Tool aria-label="增加缩进量">
                <IndentIcon />
            </Tool>
            <Separator />
            <Tool aria-label="中文版式">
                <TextScaleIcon />
            </Tool>
            <Caret />
            <Separator />
            <Tool $narrow aria-label="排序">
                <SortIcon />
            </Tool>
            <Separator />
            <Tool $narrow aria-label="显示编辑标记">
                <MarksIcon />
            </Tool>
        </ToolRow>
        <ToolRow>
            {Object.keys(alignPaths).map(kind => (
                <Tool key={kind} aria-label={kind}>
                    <AlignIcon kind={kind} />
                </Tool>
            ))}
            <Tool aria-label="分散对齐">
                <DistributeIcon />
            </Tool>
            <Separator />
            <Tool $narrow aria-label="行距">
                <SpacingIcon />
            </Tool>
            <Caret />
            <Separator />
            <Tool aria-label="底纹">
                <BucketIcon />
            </Tool>
            <Caret disabled />
            <Tool aria-label="边框">
                <BordersIcon />
            </Tool>
            <Caret disabled />
        </ToolRow>
    </RibbonGroup>
);

const StylesGroup = () => (
    <RibbonGroup w={246} name="样式" launcher launcherDisabled>
        <Gallery>
            <StyleList>
                <StyleButton>
                    <Sample>AaBbCcDd</Sample>
                    <StyleName>
                        <Icon w={6} h={7}>
                            <path d="M5.500 0v4.500H1M3 2.500l-2 2 2 2" />
                        </Icon>
                        正文
                    </StyleName>
                </StyleButton>
                <StyleButton>
                    <Sample>AaBbCcDd</Sample>
                    <StyleName>
                        <Icon w={6} h={7}>
                            <path d="M5.500 0v4.500H1M3 2.500l-2 2 2 2" />
                        </Icon>
                        无间隔
                    </StyleName>
                </StyleButton>
                <StyleButton>
                    <Sample $large>AaBb</Sample>
                    <StyleName>标题 1</StyleName>
                </StyleButton>
            </StyleList>
            <GalleryScroll>
                <ScrollButton $disabled aria-label="上一行">
                    <Arrow up />
                </ScrollButton>
                <ScrollButton aria-label="下一行">
                    <Arrow />
                </ScrollButton>
                <ScrollButton aria-label="其他">
                    <Icon w={7} h={6}>
                        <path d="M0 .5h7" />
                        <path d="M.5 2.500h6l-3 3z" fill="currentColor" stroke="none" />
                    </Icon>
                </ScrollButton>
            </GalleryScroll>
        </Gallery>
    </RibbonGroup>
);

const EditingGroup = () => (
    <Group $w={75}>
        <IconColumn>
            <EditButton>
                <EditIcon>
                    <SearchIcon />
                </EditIcon>
                查找
                <CaretButton as="span">
                    <Arrow />
                </CaretButton>
            </EditButton>
            <EditButton>
                <ReplaceGlyph>
                    a<em>b</em>
                    <b>ac</b>
                </ReplaceGlyph>
                替换
            </EditButton>
            <EditButton>
                <EditIcon>
                    <PointerIcon />
                </EditIcon>
                选择
                <Arrow />
            </EditButton>
        </IconColumn>
        <GroupFooter>
            <GroupName>编辑</GroupName>
        </GroupFooter>
    </Group>
);

export default function App() {
    const [dialogOpen, setDialogOpen] = useState(true);

    return (
        <Window>
            <GlobalStyle />
            <Header>
                <TitlePattern />
                <TitleBar>
                    <QuickAccess>
                        <BarButton aria-label="保存">
                            <SaveIcon />
                        </BarButton>
                        <BarButton aria-label="撤消">
                            <UndoIcon />
                        </BarButton>
                        <Arrow />
                        <BarButton aria-label="重复">
                            <RedoIcon />
                        </BarButton>
                        <BarButton $bright aria-label="自定义快速访问工具栏">
                            <Icon w={5} h={6}>
                                <path d="M0 .5h5" />
                                <path d="M0 3h5L2.500 6z" fill="currentColor" stroke="none" />
                            </Icon>
                        </BarButton>
                    </QuickAccess>
                    <Title>caohaifeng.docx - Word</Title>
                    <WindowButtons>
                        <BarButton $w={46} aria-label="功能区显示选项">
                            <RibbonOptionsIcon />
                        </BarButton>
                        <BarButton $w={46} aria-label="最小化">
                            <Icon w={10} h={10}>
                                <path d="M0 5.500h10" />
                            </Icon>
                        </BarButton>
                        <BarButton $w={46} aria-label="最大化">
                            <Icon w={10} h={10}>
                                <path d="M.5 .5h9v9h-9z" />
                            </Icon>
                        </BarButton>
                        <BarButton $w={46} aria-label="关闭">
                            <Icon w={10} h={10}>
                                <path d="M0 0l10 10M10 0L0 10" />
                            </Icon>
                        </BarButton>
                    </WindowButtons>
                </TitleBar>
                <TabBar>
                    <Tab $file>文件</Tab>
                    {tabs.map((name, i) => (
                        <Tab key={name} $active={i === 0}>
                            {name}
                        </Tab>
                    ))}
                    <TellMe>
                        <BulbIcon />
                        告诉我您想要做什么...
                    </TellMe>
                    <Account>
                        <span>曹海峰</span>
                        <ShareButton>
                            <ShareIcon />
                            共享
                        </ShareButton>
                    </Account>
                </TabBar>
            </Header>

            <Ribbon>
                <RibbonGroup w={73} name="剪贴板" row launcher>
                    <PasteButton>
                        <PasteIcon />
                        <span>粘贴</span>
                        <Arrow />
                    </PasteButton>
                    <IconColumn>
                        <Tool $narrow aria-label="剪切">
                            <CutIcon />
                        </Tool>
                        <Tool $narrow aria-label="复制">
                            <CopyIcon />
                        </Tool>
                        <Tool $narrow aria-label="格式刷">
                            <BrushIcon />
                        </Tool>
                    </IconColumn>
                </RibbonGroup>
                <FontGroup />
                <ParagraphGroup />
                <StylesGroup />
                <EditingGroup />
                <CollapseButton aria-label="折叠功能区">
                    <Icon w={10} h={7} stroke="#666">
                        <path d="M1 5.500l4-4 4 4" strokeWidth="1.800" />
                    </Icon>
                </CollapseButton>
            </Ribbon>

            <Workspace>
                <Page>
                    <CropRow>
                        <CropMark $side="right" />
                        <CropMark $side="left" />
                    </CropRow>
                    <DocumentText />
                </Page>
            </Workspace>

            <StatusBar>
                <StatusText>第 1 页 , 共 1 页</StatusText>
                <StatusText>17/394 个字</StatusText>
                <StatusText>
                    <ProofIcon />
                </StatusText>
                <StatusText>中文(中国)</StatusText>
                <ViewButtons>
                    <ViewButton aria-label="阅读视图">
                        <ReadIcon />
                    </ViewButton>
                    <ViewButton $active aria-label="页面视图">
                        <PrintIcon />
                    </ViewButton>
                    <ViewButton aria-label="Web 版式视图">
                        <WebIcon />
                    </ViewButton>
                </ViewButtons>
                <Zoom>
                    <button aria-label="缩小">
                        <Icon w={8} h={8} strokeWidth="2">
                            <path d="M1 4h6" />
                        </Icon>
                    </button>
                    <ZoomSlider type="range" aria-label="缩放" defaultValue="50" />
                    <button aria-label="放大">
                        <Icon w={8} h={8} strokeWidth="2">
                            <path d="M0 4h8M4 0v8" />
                        </Icon>
                    </button>
                </Zoom>
                <span>100%</span>
            </StatusBar>

            {dialogOpen && <FindDialog onClose={() => setDialogOpen(false)} />}
        </Window>
    );
}
